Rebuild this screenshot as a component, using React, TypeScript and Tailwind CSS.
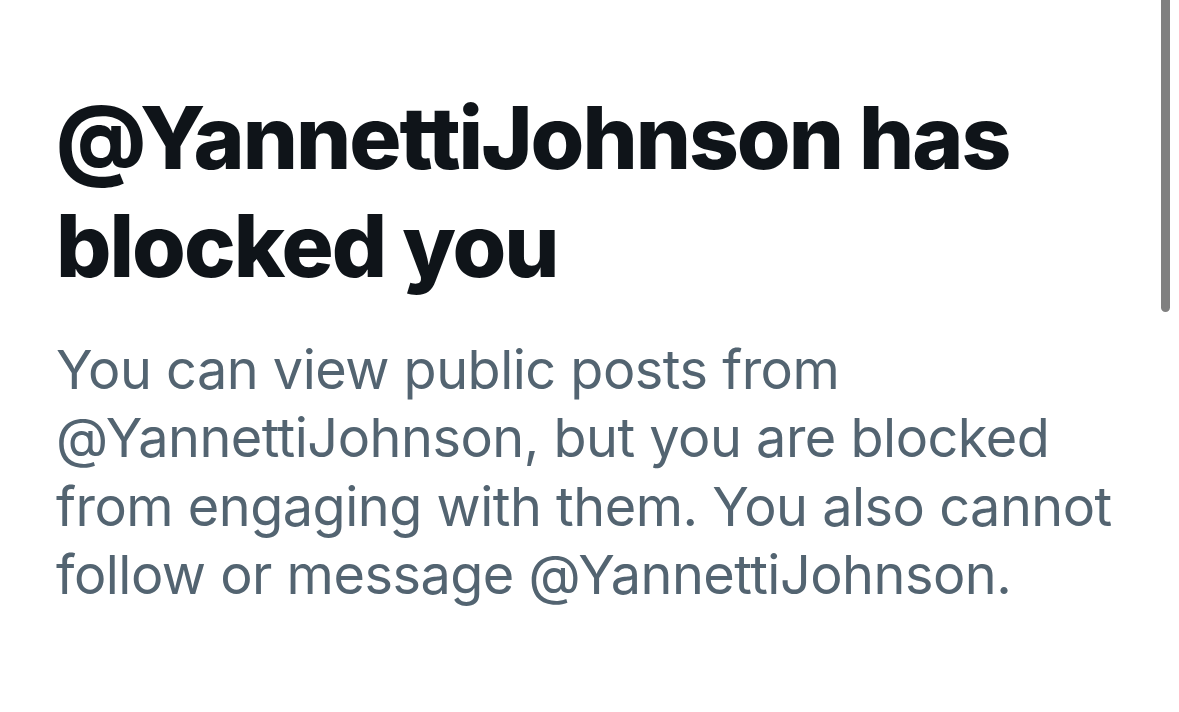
export default function App() {
  return (
    <div className="relative h-[712px] w-[1179px] overflow-hidden bg-white font-['Inter',sans-serif]">
      <div className="pl-[56px] pt-[84px]">
        <h1 className="text-[87px] font-extrabold leading-[108px] tracking-[-2px] text-[#0f1419]">
          @YannettiJohnson has
          <br />
          blocked you
        </h1>
        <p className="mt-[36px] text-[54px] leading-[68.3px] tracking-[-0.5px] text-[#536471]">
          You can view public posts from
          <br />
          @YannettiJohnson, but you are blocked
          <br />
          from engaging with them. You also cannot
          <br />
          follow or message @YannettiJohnson.
        </p>
      </div>

      {/* scrollbar */}
      <div className="absolute right-[9px] top-0 h-[312px] w-[9px] rounded-b-full bg-[#808080]" />
    </div>
  )
}
